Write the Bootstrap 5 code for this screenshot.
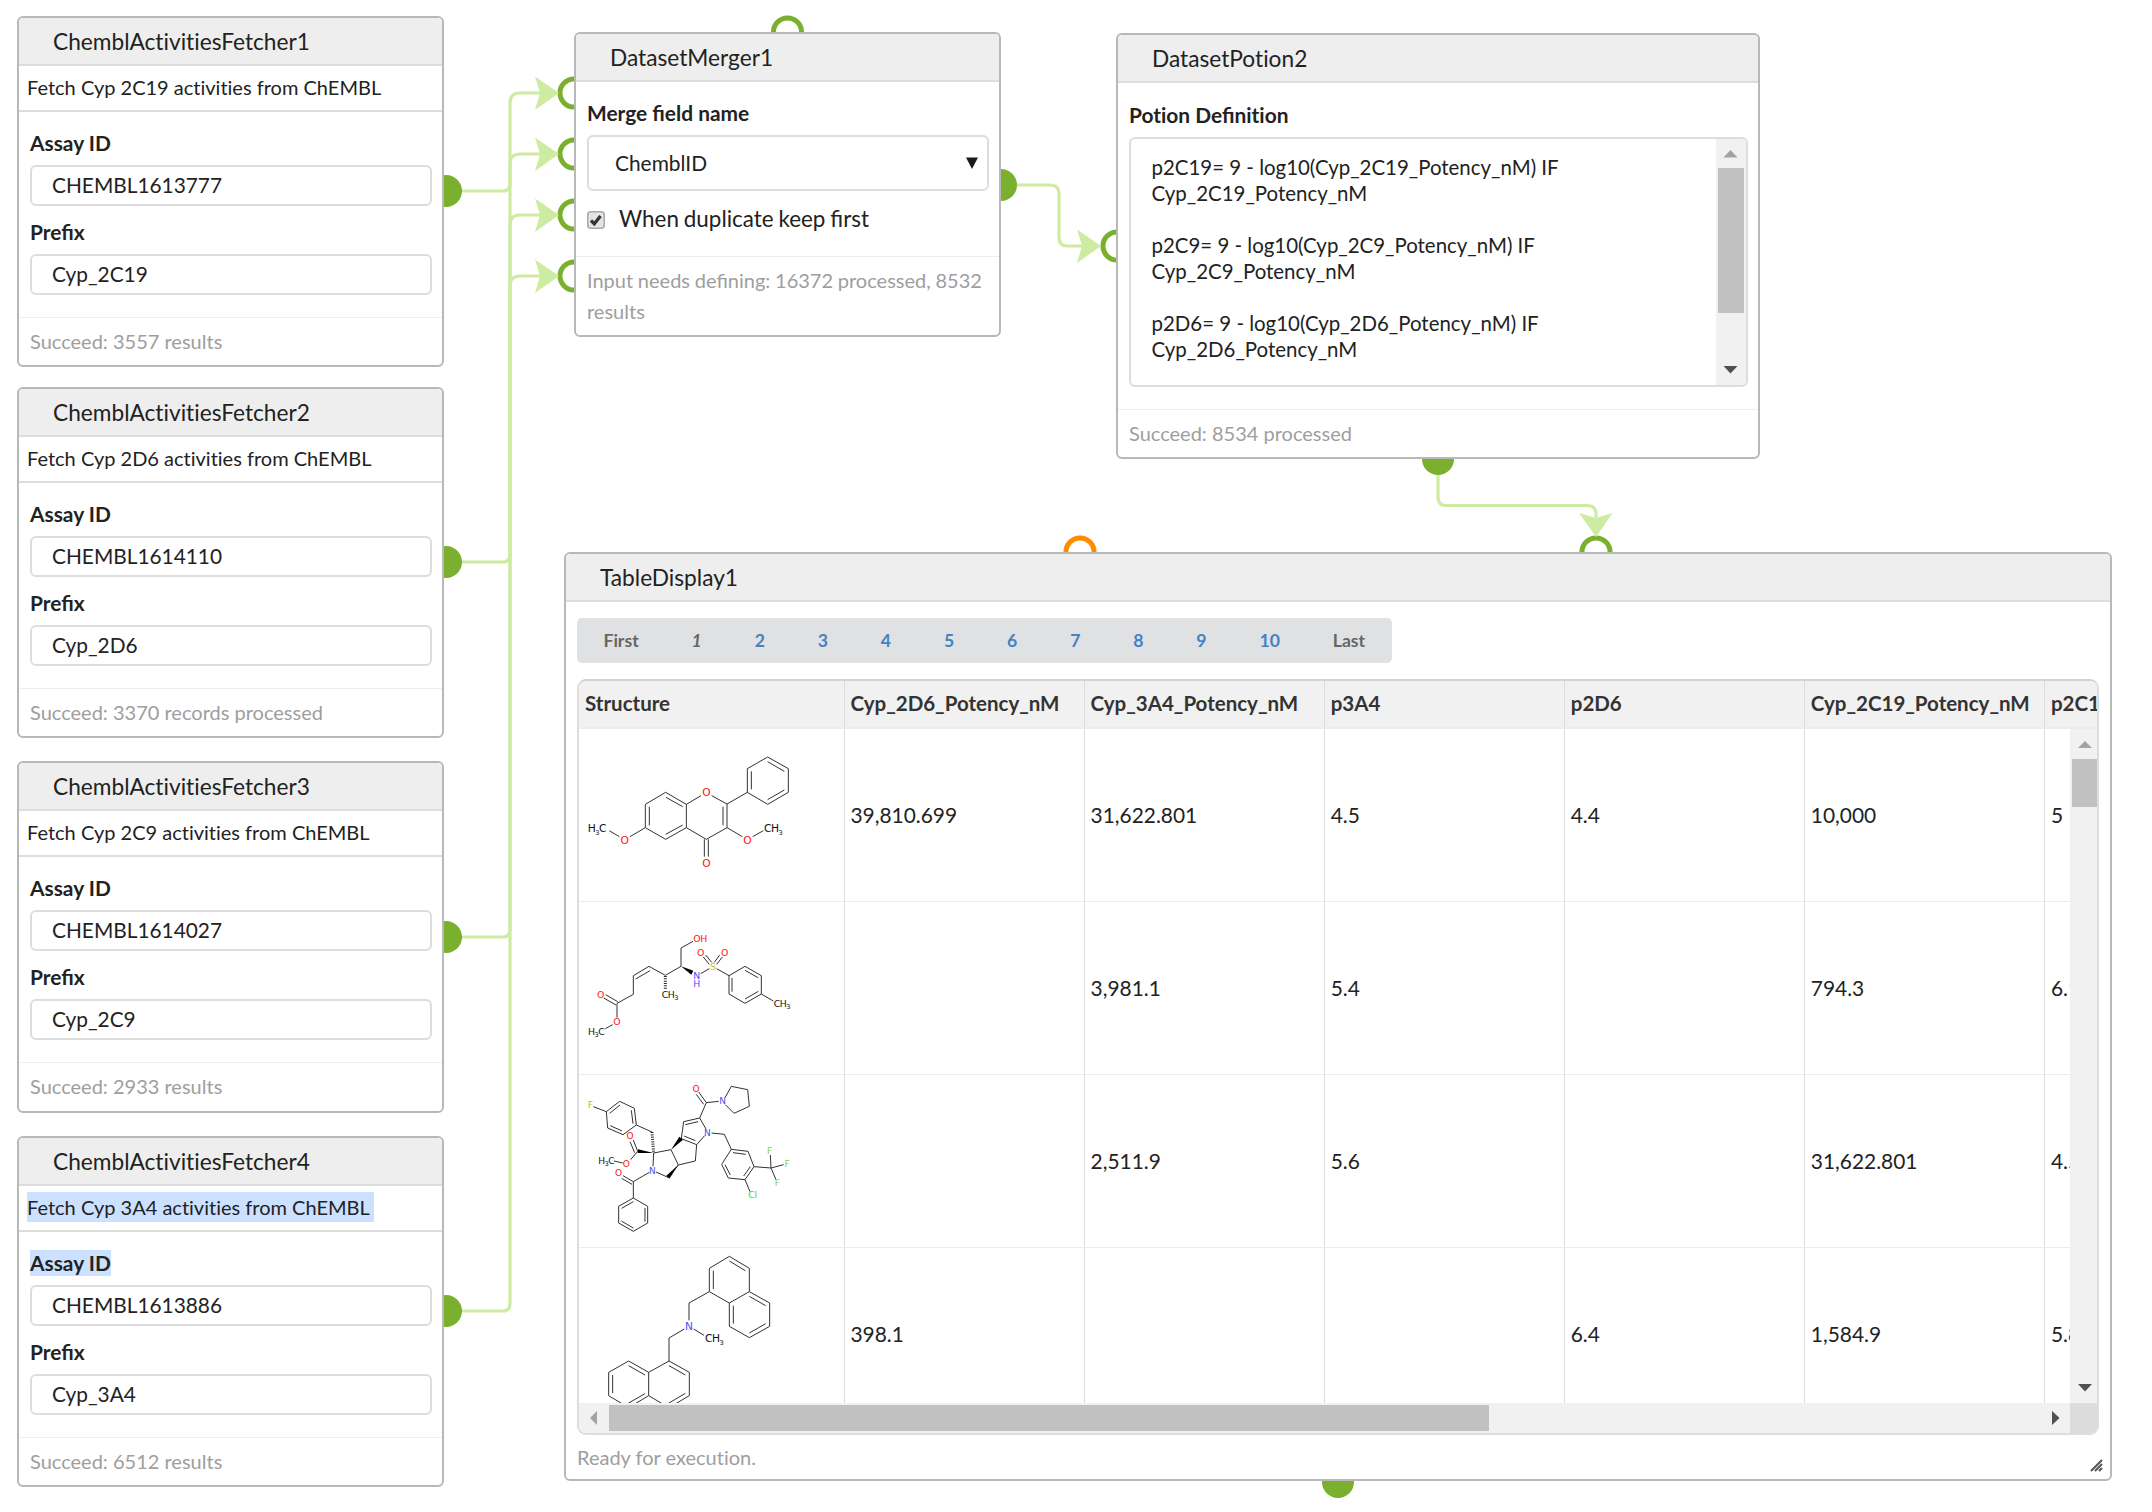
<!DOCTYPE html>
<html lang="en">
<head>
<meta charset="utf-8">
<title>Workflow</title>
<link href="https://cdn.jsdelivr.net/npm/bootstrap@5.3.0/dist/css/bootstrap.min.css" rel="stylesheet">
<style>
body{font-family:Lato,sans-serif;font-size:20.9px;color:#222;background:#fff;overflow:hidden}
.canvas{width:2152px;height:1512px}
.wires{left:0;top:0}
.wires .wire{fill:none;stroke:#cdeca2;stroke-width:3.2}
.wires .tip{fill:#cdeca2}
.wires .ring{fill:#fff;stroke:#7bb02e;stroke-width:5}
.wires .ring.opt{stroke:#ff8c00}
.wires .dot{fill:#7bb02e}
.node{border:2px solid #b8b8b8;border-radius:6px;background:#fff;width:427px;height:351px}
.node-head{height:48px;padding:1px 0 0 34px;background:#eee;border-bottom:2px solid #ddd;border-radius:4px 4px 0 0;font-size:22.7px;line-height:34px;font-variant-ligatures:none}
.node-desc{height:46px;padding:0 0 2px 8px;border-bottom:2px solid #ddd;font-size:20px;font-variant-ligatures:none}
.node-body{padding:18px 10px 0 11px}
.node-body .lbl{display:block;width:fit-content;line-height:26px;font-weight:700;margin-bottom:9px}
.node .form-control{height:41px;border:2px solid #ddd;border-radius:6px;padding:0 20px 2px;font-size:20.85px;color:#222;line-height:26px}
.field+.field{margin-top:13px}
.node-foot{border-top:1px solid #eee;padding:8px 11px 7px;line-height:31px;color:#9e9e9e;font-size:20px}
.plain{font-variant-ligatures:none}
.fetch-foot{margin-top:22px}
.sel{background:#cce1ff}
.pick{height:56px;border:2px solid #ddd;border-radius:6px;padding:0 9px 0 26px}
.check-row{height:30px;margin-top:14px}
.check-row span{font-size:22.4px;word-spacing:-.8px;margin:-3px 0 0 14px}
.n1{left:17px;top:16px}.n2{left:17px;top:387px}.n3{left:17px;top:761px;height:352px}.n4{left:17px;top:1136px}
.merger{left:574px;top:32px;height:305px}
.merger .node-foot{margin-top:21px;word-spacing:-.4px}
.potion{left:1116px;top:33px;width:644px;height:426px}
.potion .node-body{padding-top:19px}
.viewer{left:564px;top:552px;width:1548px;height:929px}
.code-box{height:250px;border:2px solid #ddd;border-radius:6px;overflow:hidden}
.code-box .code{padding:14.5px 20.5px;font-size:20.45px;line-height:26.05px;white-space:pre-line}
.vbar{width:30px;background:#f1f1f1;flex:none}
.vbar .thumb{background:#c1c1c1;margin-left:2px}
.pager{width:fit-content;height:45px;background:#e0e1e2;border-radius:5px;font-size:17.63px;font-weight:700;color:#666;padding-top:1px}
.pager span{padding:0 1.5em}
.pager a{padding:0 1.5em;color:#4183c4;text-decoration:none}
.grid-box{height:756px;width:1522px;margin-top:16px;border:2px solid #ddd;border-top-color:#d2d2d2;border-radius:9px;overflow:hidden}
.grid-box table{table-layout:fixed;width:1706px;margin:0;--bs-table-bg:transparent}
.grid-box th,.grid-box td{padding:0 0 0 6px;border-right:1px solid #ddd;vertical-align:middle;border-bottom:0;white-space:nowrap;overflow:hidden;color:#222}
.grid-box th{height:46px;color:#333;font-size:20.5px;padding-bottom:2px}
.grid-head{height:48px;background:#f1f1f1;border-bottom:2px solid #ececec;overflow:hidden}
.grid-box td{height:173px;border-bottom:1px solid #ececec}
.grid-box td:first-child{padding:0}
.rows{width:1491px;height:674px;overflow:hidden}
.rows table{margin-top:-1px}
.grid-box .vbar{width:27px}
.hbar{height:30px;width:1491px;background:#f1f1f1}
.hbar .thumb{width:880px;height:26px;background:#c1c1c1}
.corner{width:27px;height:30px;background:#dcdcdc}
.mol{display:block;width:265px;height:172px;transform:translateY(1px);font-family:"DejaVu Sans",sans-serif;font-size:32px;letter-spacing:-1.5px}
.mol path{fill:none;stroke:#2a2a2a;stroke-width:2.9}
.mol .w{fill:#000;stroke:none}
.mol .h{stroke-width:9;stroke-dasharray:3 4}
.mol text{fill:#111}
.mol .m{text-anchor:middle;letter-spacing:0}
.mol .o{fill:#f11}.mol .n{fill:#4055f0}.mol .s{fill:#c5c52a}.mol .f{fill:#7fd34a}.mol .c{fill:#2ce02c}
.mol .b{font-size:20px}
.grip{right:7px;bottom:7px}
</style>
<script src="https://cdn.jsdelivr.net/npm/bootstrap@5.3.0/dist/js/bootstrap.bundle.min.js"></script>
</head>
<body>
<main class="canvas position-relative overflow-hidden">
<svg class="wires position-absolute" width="2152" height="1512" viewBox="0 0 2152 1512">
  <path class="wire" d="M460 191H503Q510 191 510 183V103Q510 93 520 93H542"/>
  <path class="wire" d="M460 562H503Q510 562 510 554V164Q510 154 520 154H542"/>
  <path class="wire" d="M460 937H503Q510 937 510 929V225Q510 215 520 215H542"/>
  <path class="wire" d="M460 1311H503Q510 1311 510 1303V286Q510 276 520 276H542"/>
  <path class="wire" d="M1016 185H1050Q1059 185 1059 194V237Q1059 246 1067 246H1084"/>
  <path class="wire" d="M1438 474V497Q1438 505.500 1446 505.500H1587Q1596 505.500 1596 514V520"/>
  <circle class="dot" cx="446" cy="191" r="16"/><circle class="dot" cx="446" cy="562" r="16"/><circle class="dot" cx="446" cy="937" r="16"/><circle class="dot" cx="446" cy="1311" r="16"/>
  <circle class="dot" cx="1001" cy="185" r="16"/><circle class="dot" cx="1438" cy="459" r="16"/><circle class="dot" cx="1338" cy="1482" r="16"/>
  <circle class="ring" cx="787.500" cy="32" r="14"/>
  <circle class="ring" cx="574" cy="93" r="14"/><circle class="ring" cx="574" cy="154" r="14"/><circle class="ring" cx="574" cy="215" r="14"/><circle class="ring" cx="574" cy="276" r="14"/>
  <circle class="ring" cx="1117" cy="246" r="14"/><circle class="ring" cx="1596" cy="552" r="14"/><circle class="ring opt" cx="1080" cy="552" r="14"/>
  <path class="tip" d="M535 76.500L559 93L535 110L540 93ZM535 137.500L559 154L535 171L540 154ZM535 198.500L559 215L535 232L540 215ZM535 259.500L559 276L535 293L540 276ZM1077 229.500L1101 246L1077 263L1082 246ZM1579 513L1596 537L1612.500 513L1596 518Z"/>
</svg>

<section class="node n1 position-absolute">
  <div class="node-head d-flex align-items-center">ChemblActivitiesFetcher1</div>
  <div class="node-desc d-flex align-items-center">Fetch Cyp 2C19 activities from ChEMBL</div>
  <div class="node-body">
    <div class="field"><label class="lbl">Assay ID</label><input class="form-control" value="CHEMBL1613777"></div>
    <div class="field"><label class="lbl">Prefix</label><input class="form-control" value="Cyp_2C19"></div>
  </div>
  <div class="node-foot fetch-foot">Succeed: 3557 results</div>
</section>
<section class="node n2 position-absolute">
  <div class="node-head d-flex align-items-center">ChemblActivitiesFetcher2</div>
  <div class="node-desc d-flex align-items-center">Fetch Cyp 2D6 activities from ChEMBL</div>
  <div class="node-body">
    <div class="field"><label class="lbl">Assay ID</label><input class="form-control" value="CHEMBL1614110"></div>
    <div class="field"><label class="lbl">Prefix</label><input class="form-control" value="Cyp_2D6"></div>
  </div>
  <div class="node-foot fetch-foot">Succeed: 3370 records processed</div>
</section>
<section class="node n3 position-absolute">
  <div class="node-head d-flex align-items-center">ChemblActivitiesFetcher3</div>
  <div class="node-desc d-flex align-items-center">Fetch Cyp 2C9 activities from ChEMBL</div>
  <div class="node-body">
    <div class="field"><label class="lbl">Assay ID</label><input class="form-control" value="CHEMBL1614027"></div>
    <div class="field"><label class="lbl">Prefix</label><input class="form-control" value="Cyp_2C9"></div>
  </div>
  <div class="node-foot fetch-foot">Succeed: 2933 results</div>
</section>
<section class="node n4 position-absolute">
  <div class="node-head d-flex align-items-center">ChemblActivitiesFetcher4</div>
  <div class="node-desc d-flex align-items-center"><span class="sel pe-1">Fetch Cyp 3A4 activities from ChEMBL</span></div>
  <div class="node-body">
    <div class="field"><label class="lbl sel">Assay ID</label><input class="form-control" value="CHEMBL1613886"></div>
    <div class="field"><label class="lbl">Prefix</label><input class="form-control" value="Cyp_3A4"></div>
  </div>
  <div class="node-foot fetch-foot">Succeed: 6512 results</div>
</section>

<section class="node merger position-absolute">
  <div class="node-head d-flex align-items-center">DatasetMerger1</div>
  <div class="node-body">
    <label class="lbl">Merge field name</label>
    <div class="pick d-flex align-items-center justify-content-between"><span>ChemblID</span>
      <svg width="12" height="12" viewBox="0 0 12 12"><path d="M0 .5H12L6 12Z" fill="#1a1a1a"/></svg></div>
    <div class="check-row d-flex align-items-center">
      <svg width="18" height="18" viewBox="0 0 18 18"><rect x=".75" y=".75" width="16.500" height="16.500" rx="3" fill="#e4e4e4" stroke="#a9a9a9" stroke-width="1.500"/><path d="M4 9.500L7.300 12.800L13.500 5" fill="none" stroke="#333" stroke-width="3.200"/></svg>
      <span>When duplicate keep first</span></div>
  </div>
  <div class="node-foot">Input needs defining: 16372 processed, 8532 results</div>
</section>

<section class="node potion position-absolute">
  <div class="node-head d-flex align-items-center">DatasetPotion2</div>
  <div class="node-body">
    <label class="lbl"><span class="plain">Potion</span> Defi<span class="plain">nition</span></label>
    <div class="code-box d-flex">
      <div class="code flex-grow-1">p2C19= 9 - log10(Cyp_2C19_Potency_nM) IF
Cyp_2C19_Potency_nM

p2C9= 9 - log10(Cyp_2C9_Potency_nM) IF
Cyp_2C9_Potency_nM

p2D6= 9 - log10(Cyp_2D6_Potency_nM) IF
Cyp_2D6_Potency_nM</div>
      <div class="vbar"><svg class="d-block" width="29" height="29"><path d="M7.500 18.500H21.500L14.500 11Z" fill="#a3a3a3"/></svg><div class="thumb" style="height:145px;width:26px"></div><svg class="d-block" width="29" height="72"><path d="M7.500 53H21.500L14.500 60.500Z" fill="#505050"/></svg></div>
    </div>
  </div>
  <div class="node-foot fetch-foot">Succeed: 8534 processed</div>
</section>

<section class="node viewer position-absolute">
  <div class="node-head d-flex align-items-center">TableDisplay1</div>
  <div class="node-body" style="padding-top:16px">
    <nav class="pager d-flex align-items-center"><span>First</span><span class="fst-italic">1</span><a href="#">2</a><a href="#">3</a><a href="#">4</a><a href="#">5</a><a href="#">6</a><a href="#">7</a><a href="#">8</a><a href="#">9</a><a href="#">10</a><span>Last</span></nav>
    <div class="grid-box">
      <div class="grid-head"><table class="table"><colgroup><col style="width:265px"><col><col><col><col><col><col></colgroup>
        <tr><th>Structure</th><th>Cyp_2D6_Potency_nM</th><th>Cyp_3A4_Potency_nM</th><th>p3A4</th><th>p2D6</th><th>Cyp_2C19_Potency_nM</th><th>p2C19</th></tr></table></div>
      <div class="d-flex">
        <div class="rows"><table class="table"><colgroup><col style="width:265px"><col><col><col><col><col><col></colgroup>
          <tr><td><svg class="mol" viewBox="27 27 795 516">
            <path d="M287 217L349 253V323L287 358L226 323V253ZM288 232L338 260M238 260V316M287 343L338 315M349 253L393 227M425 227L471 252V323L409 358L349 323M459 260V316M403 358V410M415 358V410M471 252L532 217V146L593 111L655 146V217L593 253L532 217M544 208V154M593 125L643 154M593 239L643 210M471 323L517 350M548 350L580 332M226 323L180 350M148 350L118 332"/>
            <text class="m o" x="409" y="229">O</text><text class="m o" x="409" y="442">O</text><text class="m o" x="532" y="371">O</text><text class="m o" x="164" y="371">O</text>
            <text x="582" y="336">CH<tspan class="b" dy="8">3</tspan></text><text x="53" y="336">H<tspan class="b" dy="8">3</tspan><tspan dy="-8">C</tspan></text></svg></td>
            <td>39,810.699</td><td>31,622.801</td><td>4.5</td><td>4.4</td><td>10,000</td><td>5</td></tr>
          <tr><td><svg class="mol" viewBox="27 6 795 516" style="font-size:28px">
            <path d="M106 383L128 371M141 350V307L190 280V224L237 196L286 223L333 196V141L369 121M197 234L240 209M138 312L101 291M143 302L107 281M392 218L418 203M440 203L477 224L525 196L574 224V279L525 307L477 279V224M486 272V231M525 208L564 230M525 294L565 271M574 279L610 300M400 168L418 190M407 162L425 184M449 162L433 184M457 168L440 190"/>
            <path class="w" d="M333 196L370 209L364 221Z"/><path class="h" d="M286 225V266"/>
            <text x="54" y="402">H<tspan class="b" dy="6">3</tspan><tspan dy="-6">C</tspan></text><text class="m o" x="141" y="373">O</text><text class="m o" x="92" y="291">O</text>
            <text class="o" x="370" y="124">OH</text><text x="275" y="291">CH<tspan class="b" dy="6">3</tspan></text><text class="m n" x="380" y="235">N</text><text class="m n" x="380" y="258">H</text><text class="m s" x="429" y="207">S</text><text class="m o" x="392" y="165">O</text><text class="m o" x="464" y="165">O</text><text x="611" y="317">CH<tspan class="b" dy="6">3</tspan></text></svg></td>
            <td></td><td>3,981.1</td><td>5.4</td><td></td><td>794.3</td><td>6.1</td></tr>
          <tr><td><svg class="mol" viewBox="27 15 795 516" style="font-size:27px">
            <path d="M70 107L109 122L149 91L193 112L199 162L159 191L113 171L109 122M119 127L150 102M184 118L189 158M156 180L121 164M199 162L246 183M203 241L190 207M194 245L180 212M203 241L182 266M158 276L132 270M251 246L303 236L325 282L294 319L258 303M251 246L249 286M334 203L380 221L376 270L325 282M334 203L341 152L389 141L408 174M404 194L380 221M346 161L384 152M342 195L376 209M389 141L409 95L386 63M401 100L379 70M409 95L446 91M465 80L484 46L533 56L538 106L492 127L466 101M425 186L463 190L484 235L534 241L552 287L525 326L475 321L455 280L484 235M489 245L527 250M541 287L521 315M481 312L465 281M552 287L603 291L601 252M603 291L641 281M603 291L618 326M525 326L540 362M238 304L190 332V381L233 406V456L190 481L146 456V406L190 381M190 332L159 314M186 340L155 322M190 392L155 412M225 411V452M154 450L190 471"/>
            <path class="w" d="M251 246L204 235L203 246ZM303 236L328 197L339 206ZM325 282L289 314L298 323Z"/><path class="h" d="M246 183L251 246"/>
            <text class="m f" x="61" y="111">F</text><text class="m o" x="180" y="204">O</text><text class="m o" x="169" y="287">O</text><text x="85" y="280">H<tspan class="b" dy="5">3</tspan><tspan dy="-5">C</tspan></text><text class="m n" x="247" y="308">N</text><text class="m n" x="412" y="194">N</text><text class="m n" x="458" y="100">N</text><text class="m o" x="378" y="64">O</text><text class="m o" x="146" y="316">O</text><text class="m f" x="599" y="250">F</text><text class="m f" x="651" y="288">F</text><text class="m f" x="622" y="346">F</text><text class="m c" x="548" y="382">Cl</text></svg></td>
            <td></td><td>2,511.9</td><td>5.6</td><td></td><td>31,622.801</td><td>4.5</td></tr>
          <tr><td><svg class="mol" viewBox="27 24 795 516">
            <path d="M478 46L538 82V152L478 186L418 152V82ZM478 60L526 89M430 144V89M538 152L599 186V256L538 290L478 256V186M538 166L587 194M587 248L538 276M490 248V194M418 152L357 186V238M371 264L402 283M343 264L297 291V360L358 394V464L297 500L236 464V394L297 360M297 374L346 402M346 457L297 486M236 394L176 360L116 394V464L176 500L236 464M176 374L225 402M128 402V456M176 486L225 458"/>
            <text class="m n" x="357" y="268">N</text><text x="405" y="303">CH<tspan class="b" dy="8">3</tspan></text></svg></td>
            <td>398.1</td><td></td><td></td><td>6.4</td><td>1,584.9</td><td>5.8</td></tr>
        </table></div>
        <div class="vbar"><svg class="d-block" width="27" height="30"><path d="M8 19H22L15 12Z" fill="#a3a3a3"/></svg><div class="thumb" style="height:48px"></div><svg class="d-block" width="27" height="596"><path d="M8 577H22L15 584.500Z" fill="#505050"/></svg></div>
      </div>
      <div class="d-flex"><div class="hbar d-flex align-items-center"><svg width="30" height="30"><path d="M18 8V22L11 15Z" fill="#a3a3a3"/></svg><div class="thumb"></div><svg class="ms-auto" width="30" height="30"><path d="M12 8V22L19.500 15Z" fill="#505050"/></svg></div><div class="corner"></div></div>
    </div>
  </div>
  <div class="node-foot border-0 pt-2 plain" style="margin-top:-1px">Ready for execution.</div>
  <svg class="grip position-absolute" width="13" height="13"><path d="M1 12L12 1M5 12L12 5M9 12L12 9" stroke="#555" stroke-width="2"/></svg>
</section>
</main>
</body>
</html>
